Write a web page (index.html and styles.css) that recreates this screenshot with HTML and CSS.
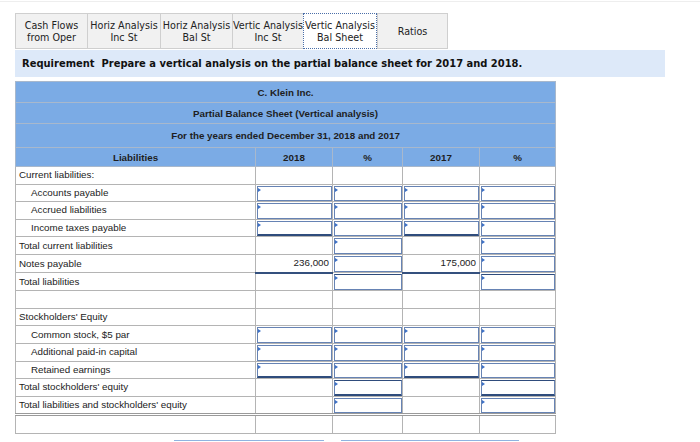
FILE: index.html
```html
<!DOCTYPE html>
<html>
<head>
<meta charset="utf-8">
<link rel="stylesheet" href="styles.css">
</head>
<body>
<div class="topline"></div>
<div class="tabs">
  <div class="tab w72">Cash Flows<br>from Oper</div>
  <div class="tab w73">Horiz Analysis<br>Inc St</div>
  <div class="tab w72">Horiz Analysis<br>Bal St</div>
  <div class="tab w71">Vertic Analysis<br>Inc St</div>
  <div class="tab w74 active">Vertic Analysis<br>Bal Sheet</div>
  <div class="tab w71">Ratios</div>
</div>
<div class="req"><span class="req-label">Requirement</span>&nbsp; Prepare a vertical analysis on the partial balance sheet for 2017 and 2018.</div>
<table class="sheet">
  <colgroup>
    <col class="c-label"><col class="c-amt"><col class="c-pct"><col class="c-amt2"><col class="c-pct2">
  </colgroup>
  <tr class="h1"><th colspan="5">C. Klein Inc.</th></tr>
  <tr class="h2"><th colspan="5">Partial Balance Sheet (Vertical analysis)</th></tr>
  <tr class="h3"><th colspan="5">For the years ended December 31, 2018 and 2017</th></tr>
  <tr class="h4"><th>Liabilities</th><th>2018</th><th>%</th><th>2017</th><th>%</th></tr>

  <tr><td>Current liabilities:</td><td></td><td></td><td></td><td></td></tr>
  <tr><td class="ind">Accounts payable</td><td><div class="in"></div></td><td><div class="in"></div></td><td><div class="in"></div></td><td><div class="in"></div></td></tr>
  <tr><td class="ind">Accrued liabilities</td><td><div class="in"></div></td><td><div class="in"></div></td><td><div class="in"></div></td><td><div class="in"></div></td></tr>
  <tr><td class="ind">Income taxes payable</td><td><div class="in tot"></div></td><td><div class="in"></div></td><td><div class="in tot"></div></td><td><div class="in"></div></td></tr>
  <tr><td>Total current liabilities</td><td></td><td><div class="in"></div></td><td></td><td><div class="in"></div></td></tr>
  <tr><td>Notes payable</td><td class="num dk">236,000</td><td><div class="in"></div></td><td class="num dk">175,000</td><td><div class="in"></div></td></tr>
  <tr><td>Total liabilities</td><td></td><td><div class="in dtop"></div></td><td></td><td><div class="in dtop"></div></td></tr>
  <tr><td></td><td></td><td></td><td></td><td></td></tr>
  <tr><td>Stockholders' Equity</td><td></td><td></td><td></td><td></td></tr>
  <tr><td class="ind">Common stock, $5 par</td><td><div class="in"></div></td><td><div class="in"></div></td><td><div class="in"></div></td><td><div class="in"></div></td></tr>
  <tr><td class="ind">Additional paid-in capital</td><td><div class="in"></div></td><td><div class="in"></div></td><td><div class="in"></div></td><td><div class="in"></div></td></tr>
  <tr><td class="ind">Retained earnings</td><td><div class="in tot"></div></td><td><div class="in"></div></td><td><div class="in tot"></div></td><td><div class="in"></div></td></tr>
  <tr><td>Total stockholders' equity</td><td></td><td><div class="in tot dtop"></div></td><td></td><td><div class="in tot dtop"></div></td></tr>
  <tr class="dbl"><td>Total liabilities and stockholders' equity</td><td></td><td><div class="in"></div></td><td></td><td><div class="in"></div></td></tr>
  <tr><td></td><td></td><td></td><td></td><td></td></tr>
</table>
<div class="nav">
  <div class="btn b1"></div>
  <div class="btn b2"></div>
</div>
</body>
</html>
```

FILE: styles.css
```css
html, body {
  margin: 0;
  padding: 0;
  background: #ffffff;
  overflow: hidden;
}
body {
  font-family: "Liberation Sans", Arial, sans-serif;
  color: #222;
}
.topline {
  height: 1px;
  background: #eeeeee;
  margin-top: 1px;
}
.tabs {
  display: flex;
  padding: 11px 0 0 15px;
  height: 36px;
}
.tab {
  box-sizing: border-box;
  height: 36px;
  border: 1px solid #cfcfcf;
  border-right: none;
  background: #f1f1f1;
  font-family: "DejaVu Sans", Verdana, sans-serif;
  font-size: 9.6px;
  line-height: 12px;
  color: #222;
  text-align: center;
  display: flex;
  align-items: center;
  justify-content: center;
  padding-top: 1px;
}
.tab:last-child { border-right: 1px solid #cfcfcf; }
.w71 { width: 71px; }
.w72 { width: 72px; }
.w73 { width: 73px; }
.w74 { width: 74px; }
.tab.active {
  background: #ffffff;
  border: 1px dotted #4a6ea8;
}
.req {
  margin: 1px 0 0 15px;
  width: 643px;
  height: 27px;
  background: #dde9f9;
  font-family: "DejaVu Sans", Verdana, sans-serif;
  font-weight: bold;
  font-size: 9.95px;
  line-height: 27px;
  padding-left: 7px;
  color: #111;
}
.sheet {
  margin: 4px 0 0 15px;
  border-collapse: collapse;
  table-layout: fixed;
  width: 540px;
  font-size: 9.8px;
  border: 1px solid #a9a9a9;
}
.c-label { width: 240px; }
.c-amt { width: 77px; }
.c-pct { width: 70px; }
.c-amt2 { width: 77px; }
.c-pct2 { width: 76px; }
.sheet th {
  background: #7babe5;
  font-weight: bold;
  color: #1e1e1e;
  border: 1px solid #a8b8cc;
  padding: 0;
  text-align: center;
}
.h1 th { height: 20px; }
.h2 th { height: 20px; }
.h3 th { height: 23px; }
.h4 th { height: 18px; }
.sheet td {
  height: 16.6px;
  border: 1px solid #b4b4b4;
  padding: 0 2px 0 3px;
  white-space: nowrap;
  position: relative;
  line-height: 12px;
}
.sheet td.ind { padding-left: 15px; }
.sheet td.num { text-align: right; padding-right: 3px; }
.sheet td.dk { border-bottom: 2px solid #34507e; }
.dbl td { border-bottom: 3px double #9a9a9a; }
.in {
  position: absolute;
  left: 1px;
  right: 0px;
  top: 1px;
  bottom: 0px;
  border: 1px solid #6683b4;
  background: #fff;
}
.in::before {
  content: "";
  position: absolute;
  left: 0;
  top: 1px;
  border-left: 3px solid #3c71c7;
  border-top: 2px solid transparent;
  border-bottom: 2px solid transparent;
}
.in.tot { border-bottom: 2px solid #2f4c7c; }
.in.dtop { border-top: 1px solid #2f4c7c; }
.nav {
  display: flex;
  margin-top: 6px;
  padding-left: 174px;
  height: 2px;
  overflow: hidden;
}
.btn {
  height: 2px;
  border-top: 1px solid #8fb3e0;
  box-sizing: border-box;
}
.b1 { width: 150px; }
.b2 { width: 178px; margin-left: 17px; }
```
